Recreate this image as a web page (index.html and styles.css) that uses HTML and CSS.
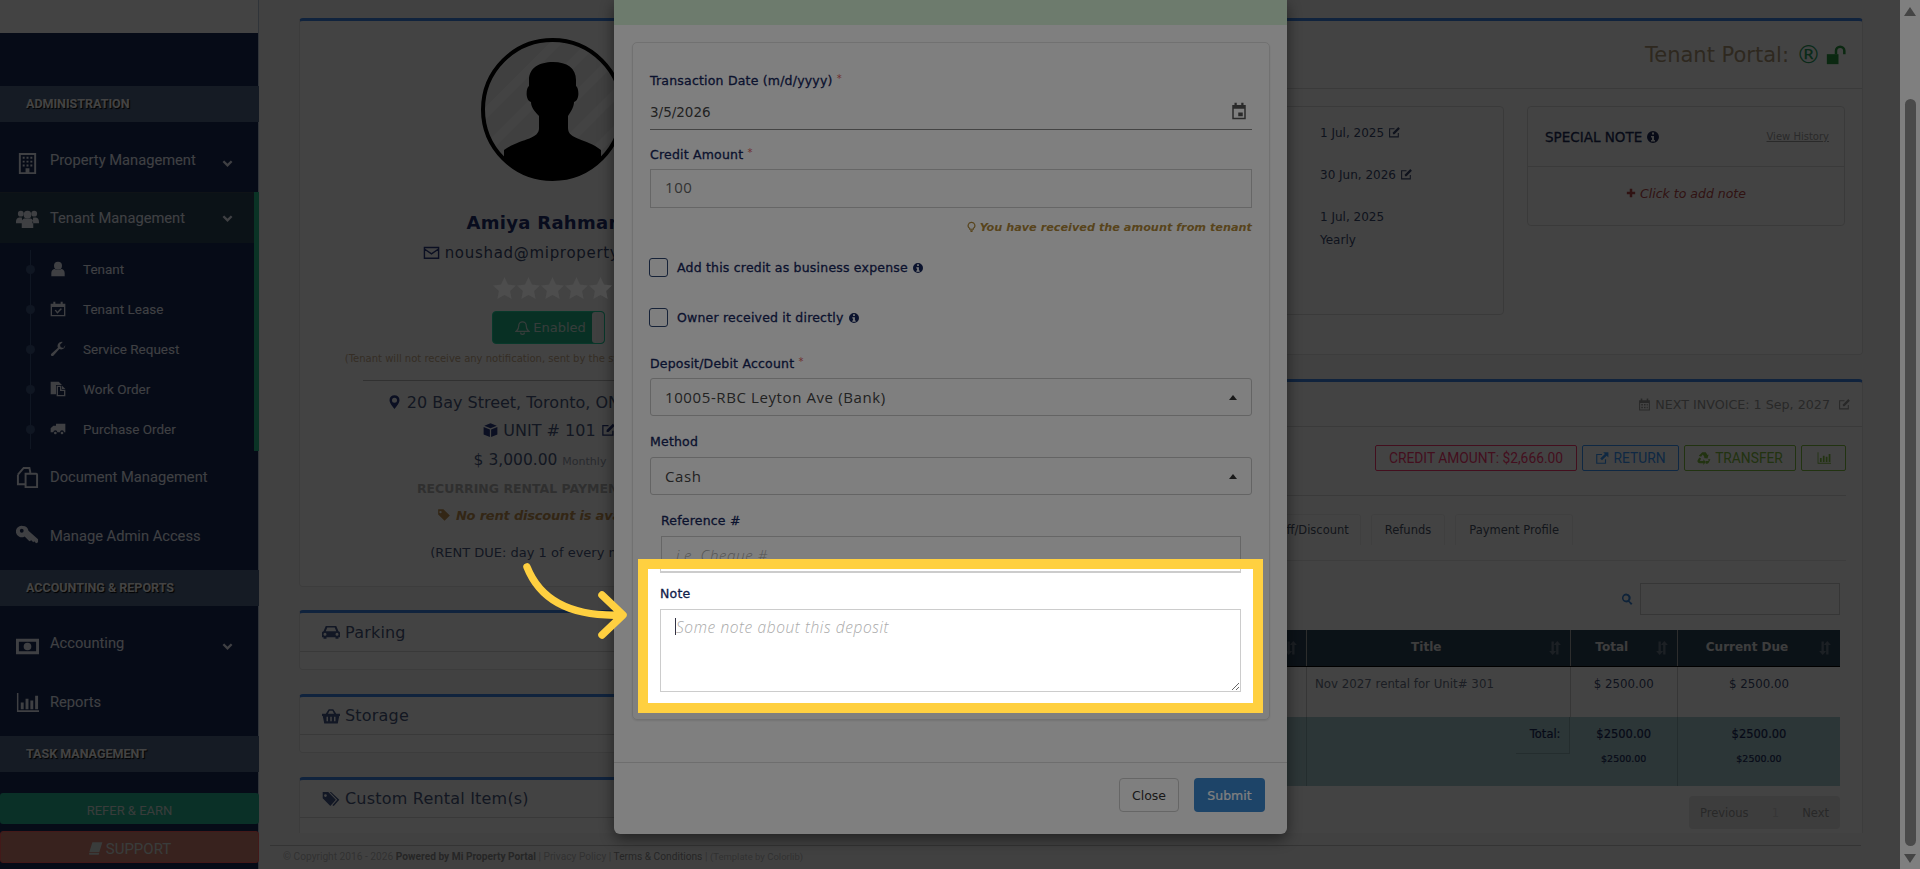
FILE: index.html
```html
<!DOCTYPE html>
<html>
<head>
    <title>Tenant Profile</title>
    <meta charset="UTF-8">
    <link rel="stylesheet" href="styles.css"></head>
<body>
    <svg class="sprite" xmlns="http://www.w3.org/2000/svg">
        <symbol id="i-building" viewBox="0 0 24 24"><path fill-rule="evenodd" d="M3 1h18v22H3zM5 3v18h5v-4h4v4h5V3zM7 5h2v2H7zM11 5h2v2h-2zM15 5h2v2h-2zM7 9h2v2H7zM11 9h2v2h-2zM15 9h2v2h-2zM7 13h2v2H7zM11 13h2v2h-2zM15 13h2v2h-2z"/></symbol>
        <symbol id="i-users" viewBox="0 0 24 24"><circle cx="5" cy="7" r="3"/><circle cx="19" cy="7" r="3"/><circle cx="12" cy="8" r="4"/><path d="M0 16c0-4 2-5 4-5h2l1 6H0zM24 16c0-4-2-5-4-5h-2l-1 6h7zM6 22v-5c0-4 2-5 3-5h6c1 0 3 1 3 5v5z"/></symbol>
        <symbol id="i-user" viewBox="0 0 24 24"><circle cx="12" cy="7" r="6"/><path d="M2 23v-5c0-4 3-6 5-6 3 2 7 2 10 0 2 0 5 2 5 6v5z"/></symbol>
        <symbol id="i-calcheck" viewBox="0 0 24 24"><path fill-rule="evenodd" d="M1 4h4V1h3v3h8V1h3v3h4v19H1zM3 9v12h18V9zM7 14l2-1 2 3 5-5 2 1-7 7z"/></symbol>
        <symbol id="i-wrench" viewBox="0 0 24 24"><path d="M23 6c0 5-5 8-9 6L5 22c-2 2-5-1-3-3l10-9c-2-4 1-9 6-9l1 .5-4 4 1 4 4 1 3-4z"/></symbol>
        <symbol id="i-files" viewBox="0 0 24 24"><path fill-rule="evenodd" d="M1 1h12v5H9v14H1zM13 1l5 5h-5zM10 7h7v6h6v10H10zM12 9v12h9v-6h-6V9zM18 7l5 5h-5z"/></symbol>
        <symbol id="i-truck" viewBox="0 0 24 24"><path d="M9 4h14v13h-2a3 3 0 0 0-6 0h-4a3 3 0 0 0-6 0H1v-6l4-4h4z"/><circle cx="8" cy="18" r="2"/><circle cx="18" cy="18" r="2"/></symbol>
        <symbol id="i-clone" viewBox="0 0 24 24"><path d="M2 9l6-7h6l1 5M10 8h6l5 0c1 0 1 1 1 1v13H10zM2 9v10h7" fill="none" stroke="currentColor" stroke-width="2"/></symbol>
        <symbol id="i-key" viewBox="0 0 24 24"><path fill-rule="evenodd" d="M7 2a6 6 0 0 1 6 5l10 9v3l-2 1-2-2-1 1-2-2-2 1-5-5A6 6 0 1 1 7 2zM6 5a2 2 0 1 0 0 4 2 2 0 0 0 0-4z"/></symbol>
        <symbol id="i-money" viewBox="0 0 24 24"><path fill-rule="evenodd" d="M0 4h24v16H0zM3 7v10h18V7zM12 8a4 4 0 1 1 0 8 4 4 0 0 1 0-8z"/></symbol>
        <symbol id="i-chart" viewBox="0 0 24 24"><path d="M1 2h1.500v18H24v2H1zM5 12h3v7H5zM10 8h3v11h-3zM15 10h3v9h-3zM20 5h3v14h-3z"/></symbol>
        <symbol id="i-book" viewBox="0 0 24 24"><path d="M7 2h16l-5 16H2zM2 19h16l-1 3H3a2 2 0 0 1-1-3z"/></symbol>
        <symbol id="i-mail" viewBox="0 0 24 24"><path fill="none" stroke="currentColor" stroke-width="2" d="M2 5h20v15H2zM2 7l10 7 10-7"/></symbol>
        <symbol id="i-bell" viewBox="0 0 24 24"><path fill="none" stroke="currentColor" stroke-width="2" d="M12 3a6 6 0 0 1 6 6c0 6 2 7 4 9H2c2-2 4-3 4-9a6 6 0 0 1 6-6zM9 20a3 3 0 0 0 6 0"/></symbol>
        <symbol id="i-pin" viewBox="0 0 24 24"><path fill-rule="evenodd" d="M12 1a8 8 0 0 1 8 8c0 5-8 14-8 14S4 14 4 9a8 8 0 0 1 8-8zm0 4a4 4 0 1 0 0 8 4 4 0 0 0 0-8z"/></symbol>
        <symbol id="i-cube" viewBox="0 0 24 24"><path d="M12 1l10 4-10 4L2 5zM1 7l10 4v12L1 19zM13 11l10-4v12l-10 4z"/></symbol>
        <symbol id="i-edit" viewBox="0 0 24 24"><path fill="none" stroke="currentColor" stroke-width="2" d="M19 13v7H3V5h9"/><path d="M9 12L19 2l3 3-10 10H9z"/></symbol>
        <symbol id="i-tag" viewBox="0 0 24 24"><path fill-rule="evenodd" d="M2 2h9l11 11-9 9L2 11zM6 5a2 2 0 1 0 0 4 2 2 0 0 0 0-4z"/></symbol>
        <symbol id="i-tags" viewBox="0 0 26 24"><path fill-rule="evenodd" d="M1 2h8l11 11-8 9L1 11zM5 5a2 2 0 1 0 0 4 2 2 0 0 0 0-4z"/><path d="M13 2l12 11-8 9-2-1 7-8-11-11z"/></symbol>
        <symbol id="i-car" viewBox="0 0 24 24"><path fill-rule="evenodd" d="M5 4h14l3 7c1 0 2 1 2 2v6h-2v2h-4v-2H6v2H2v-2H0v-6c0-1 1-2 2-2zM7 6l-2 5h14l-2-5zM4 13a2 2 0 1 0 0 4 2 2 0 0 0 0-4zM20 13a2 2 0 1 0 0 4 2 2 0 0 0 0-4z"/></symbol>
        <symbol id="i-basket" viewBox="0 0 24 24"><path fill-rule="evenodd" d="M5 9l4-6h6l4 6h5v3h-1l-2 10H3L1 12H0V9zM8 9h8l-2-4h-4zM6 13v6h2v-6zM11 13v6h2v-6zM16 13v6h2v-6z"/></symbol>
        <symbol id="i-cal" viewBox="0 0 24 24"><path fill-rule="evenodd" d="M2 4h3V1h3v3h8V1h3v3h3v19H2zM4 9v12h16V9zM6 11h3v3H6zM11 11h3v3h-3zM16 11h2v3h-2zM6 16h3v3H6zM11 16h3v3h-3zM16 16h2v3h-2z"/></symbol>
        <symbol id="i-ext" viewBox="0 0 24 24"><path fill="none" stroke="currentColor" stroke-width="2" d="M18 14v7H3V6h9"/><path d="M14 2h9v9l-3-3-8 8-3-3 8-8z"/></symbol>
        <symbol id="i-recycle" viewBox="0 0 24 24"><path d="M9 2h6l3 5 2-1-2 7-7-1 2-1-3-5-3 4-4-2zM1 16l3-5 3 2-2 4h6v-3l4 5-4 5v-3H5c-3 0-5-2-4-5zM23 14l-3 6c-1 1-2 2-4 2h-1v-5h5l-1-3z"/></symbol>
        <symbol id="i-search" viewBox="0 0 24 24"><path fill-rule="evenodd" d="M10 1a9 9 0 0 1 7 15l6 5-3 3-5-6A9 9 0 1 1 10 1zm0 4a5 5 0 1 0 0 10 5 5 0 0 0 0-10z"/></symbol>
        <symbol id="i-sort" viewBox="0 0 24 24"><path d="M6 1h4v16h4l-6 7-6-7h4zM18 23h-4V7h-4l6-7 6 7h-4z"/></symbol>
        <symbol id="i-info" viewBox="0 0 24 24"><path fill-rule="evenodd" d="M12 0a12 12 0 1 1 0 24 12 12 0 0 1 0-24zM10 3v4h4V3zM8 10v3h2v5H8v3h8v-3h-2v-8z"/></symbol>
        <symbol id="i-plus" viewBox="0 0 24 24"><path d="M9 2h6v7h7v6h-7v7H9v-7H2V9h7z"/></symbol>
        <symbol id="i-unlock" viewBox="0 0 24 24"><path d="M1 11h14v12H1z"/><path fill="none" stroke="currentColor" stroke-width="3" d="M12 11V7a5 5 0 0 1 10 0v4"/></symbol>
        <symbol id="i-bulb" viewBox="0 0 24 24"><path fill="none" stroke="currentColor" stroke-width="2.500" d="M12 2a7 7 0 0 1 4 13v2H8v-2a7 7 0 0 1 4-13z"/><path d="M9 19h6v2l-2 2h-2l-2-2z"/></symbol>
        <symbol id="i-today" viewBox="0 0 24 24"><path fill-rule="evenodd" d="M3 4h3V1h3v3h6V1h3v3h3v19H3zM5 9v12h14V9zM11 14h6v5h-6z"/></symbol>
        <symbol id="i-chevron" viewBox="0 0 24 24"><path fill="none" stroke="currentColor" stroke-width="5" d="M3 7l9 9 9-9"/></symbol>
        <symbol id="i-star" viewBox="0 0 24 24"><path d="M12 0l3.700 7.800 8.300 1.100-6.100 5.800 1.600 8.300-7.500-4.100-7.500 4.100 1.600-8.300L0 8.900l8.300-1.100z"/></symbol>
    </svg>

    <div class="screen">
        <aside class="sidebar">
            <div class="side-top"></div>
            <div class="side-logo"></div>
            <div class="side-band">ADMINISTRATION</div>
            <a class="side-item item-first"><svg class="side-icon"><use href="#i-building"/></svg>Property Management<svg class="chevron"><use href="#i-chevron"/></svg></a>
            <div class="side-open">
                <a class="side-item item-active"><svg class="side-icon"><use href="#i-users"/></svg>Tenant Management<svg class="chevron"><use href="#i-chevron"/></svg></a>
                <ul class="side-sub">
                    <li><svg class="sub-icon"><use href="#i-user"/></svg>Tenant</li>
                    <li><svg class="sub-icon"><use href="#i-calcheck"/></svg>Tenant Lease</li>
                    <li><svg class="sub-icon"><use href="#i-wrench"/></svg>Service Request</li>
                    <li><svg class="sub-icon"><use href="#i-files"/></svg>Work Order</li>
                    <li><svg class="sub-icon"><use href="#i-truck"/></svg>Purchase Order</li>
                </ul>
            </div>
            <a class="side-item item-doc"><svg class="side-icon"><use href="#i-clone"/></svg>Document Management</a>
            <a class="side-item item-admin"><svg class="side-icon"><use href="#i-key"/></svg>Manage Admin Access</a>
            <div class="side-band">ACCOUNTING &amp; REPORTS</div>
            <a class="side-item item-acc"><svg class="side-icon"><use href="#i-money"/></svg>Accounting<svg class="chevron"><use href="#i-chevron"/></svg></a>
            <a class="side-item item-rep"><svg class="side-icon"><use href="#i-chart"/></svg>Reports</a>
            <div class="side-band">TASK MANAGEMENT</div>
            <a class="side-btn btn-refer">REFER &amp; EARN</a>
            <a class="side-btn btn-support"><svg class="btn-icon"><use href="#i-book"/></svg>SUPPORT</a>
        </aside>

        <main class="main">
            <div class="columns">
                <div class="col-left">
                    <section class="panel profile">
                        <svg class="avatar" viewBox="0 0 143 143">
                            <defs>
                                <clipPath id="avatar-clip"><circle cx="71.500" cy="71.500" r="69.500"/></clipPath>
                                <pattern id="avatar-stripes" width="26" height="26" patternUnits="userSpaceOnUse" patternTransform="rotate(45)"><rect width="26" height="26" fill="#f2f2f2"/><rect width="9" height="26" fill="#fff"/></pattern>
                            </defs>
                            <circle cx="71.500" cy="71.500" r="69.500" fill="url(#avatar-stripes)" stroke="#000" stroke-width="4"/>
                            <path class="avatar-body" clip-path="url(#avatar-clip)" d="M23 112C40 100 58 102 58 90V78C52 72 50 68 50 64 44 62 45 50 48 48V42C48 30 58 24 72 24S95 30 95 42V48C98 50 99 62 93 64 93 68 91 72 87 78V90C87 102 105 100 120 112V143H23Z"/>
                        </svg>
                        <h2 class="tenant-name">Amiya Rahman</h2>
                        <div class="tenant-mail"><svg class="ic-mail"><use href="#i-mail"/></svg>noushad@mipropertyportal.com</div>
                        <div class="stars">
                            <svg class="star"><use href="#i-star"/></svg>
                            <svg class="star"><use href="#i-star"/></svg>
                            <svg class="star"><use href="#i-star"/></svg>
                            <svg class="star"><use href="#i-star"/></svg>
                            <svg class="star"><use href="#i-star"/></svg>
                        </div>
                        <div class="toggle"><span class="toggle-on"><svg class="ic-bell"><use href="#i-bell"/></svg>Enabled</span><span class="toggle-handle"></span></div>
                        <p class="notify-note">(Tenant will not receive any notification, sent by the system, if it is disabled)</p>
                        <hr class="profile-rule">
                        <div class="addr"><svg class="ic-addr"><use href="#i-pin"/></svg>20 Bay Street, Toronto, ON M5J 2N8</div>
                        <div class="unit"><svg class="ic-addr"><use href="#i-cube"/></svg>UNIT # 101 <svg class="ic-addr"><use href="#i-edit"/></svg></div>
                        <div class="rent">$ 3,000.00 <small>Monthly</small></div>
                        <div class="recurring">RECURRING RENTAL PAYMENT</div>
                        <div class="discount"><svg class="ic-tag"><use href="#i-tag"/></svg>No rent discount is available</div>
                        <div class="due">(RENT DUE: day 1 of every month)</div>
                    </section>
                    <section class="panel small-card"><h3 class="card-title title-first"><svg class="ic-title"><use href="#i-car"/></svg>Parking</h3></section>
                    <section class="panel small-card"><h3 class="card-title"><svg class="ic-title"><use href="#i-basket"/></svg>Storage</h3></section>
                    <section class="panel small-card custom-card"><h3 class="card-title"><svg class="ic-title"><use href="#i-tags"/></svg>Custom Rental Item(s)</h3></section>
                </div>

                <div class="col-right">
                    <section class="panel lease-panel">
                        <div class="lease-head">Tenant Portal:<span class="reg">®</span><svg class="ic-unlock"><use href="#i-unlock"/></svg></div>
                        <div class="lease-body">
                            <div class="inner-card date-card">
                                <div class="dates">
                                    <div class="date-row">1 Jul, 2025 <svg class="ic-edit"><use href="#i-edit"/></svg></div>
                                    <div class="date-row">30 Jun, 2026 <svg class="ic-edit"><use href="#i-edit"/></svg></div>
                                    <div class="date-row">1 Jul, 2025</div>
                                    <div class="date-row">Yearly</div>
                                </div>
                            </div>
                            <div class="inner-card note-card">
                                <div class="note-head"><b>SPECIAL NOTE</b><svg class="ic-info-lg"><use href="#i-info"/></svg><a class="history">View History</a></div>
                                <div class="note-add"><svg class="ic-plus"><use href="#i-plus"/></svg>Click to add note</div>
                            </div>
                        </div>
                    </section>

                    <section class="panel ledger-panel">
                        <div class="ledger-head"><svg class="ic-cal"><use href="#i-cal"/></svg>NEXT INVOICE: 1 Sep, 2027 <svg class="ic-cal ic-gap"><use href="#i-edit"/></svg></div>
                        <div class="action-row">
                            <a class="act act-red">CREDIT AMOUNT: $2,666.00</a>
                            <a class="act act-blue"><svg class="ic-act"><use href="#i-ext"/></svg>RETURN</a>
                            <a class="act act-green"><svg class="ic-act"><use href="#i-recycle"/></svg>TRANSFER</a>
                            <a class="act act-green act-chart"><svg class="ic-act"><use href="#i-chart"/></svg></a>
                        </div>
                        <div class="rule-one"></div>
                        <div class="tabs">
                            <a class="tab tab-off">Rent Off/Discount</a>
                            <a class="tab">Refunds</a>
                            <a class="tab">Payment Profile</a>
                        </div>
                        <div class="rule-two"></div>
                        <div class="search-row"><svg class="ic-search"><use href="#i-search"/></svg><input class="search-box" type="text"></div>
                        <table class="ledger">
                            <colgroup><col class="c-a"><col class="c-title"><col class="c-total"><col class="c-due"></colgroup>
                            <thead>
                                <tr><th>Status<svg class="ic-sort"><use href="#i-sort"/></svg></th><th>Title<svg class="ic-sort"><use href="#i-sort"/></svg></th><th>Total<svg class="ic-sort"><use href="#i-sort"/></svg></th><th>Current Due<svg class="ic-sort"><use href="#i-sort"/></svg></th></tr>
                            </thead>
                            <tbody>
                                <tr><td></td><td class="td-title">Nov 2027 rental for Unit# 301</td><td>$ 2500.00</td><td>$ 2500.00</td></tr>
                            </tbody>
                            <tfoot>
                                <tr><td></td><td class="td-label"><div class="total-label">Total:</div></td><td>$2500.00<small>$2500.00</small></td><td>$2500.00<small>$2500.00</small></td></tr>
                            </tfoot>
                        </table>
                        <div class="pager-row"><div class="pager"><span>Previous</span><span class="pager-num">1</span><span>Next</span></div></div>
                    </section>
                </div>
            </div>
            <footer class="footer">© Copyright 2016 - 2026 <b>Powered by Mi Property Portal</b> | Privacy Policy | <span class="foot-dark">Terms &amp; Conditions</span> | <small>(Template by Colorlib)</small></footer>
        </main>

        <div class="scrollbar">
            <span class="sb-up"></span>
            <span class="sb-thumb"></span>
            <span class="sb-down"></span>
        </div>

        <div class="backdrop"></div>

        <div class="modal">
            <div class="modal-strip"></div>
            <div class="modal-panel">
                <label class="lbl lbl-first">Transaction Date (m/d/yyyy) <i class="req">*</i></label>
                <div class="date-field"><span>3/5/2026</span><svg class="ic-today"><use href="#i-today"/></svg></div>
                <label class="lbl lbl-credit">Credit Amount <i class="req">*</i></label>
                <input class="text-input input-credit" type="text" value="100">
                <div class="hint"><svg class="ic-bulb"><use href="#i-bulb"/></svg>You have received the amount from tenant</div>
                <div class="check check-one"><span class="box"></span>Add this credit as business expense<svg class="ic-info"><use href="#i-info"/></svg></div>
                <div class="check check-two"><span class="box"></span>Owner received it directly<svg class="ic-info"><use href="#i-info"/></svg></div>
                <label class="lbl lbl-deposit">Deposit/Debit Account <i class="req">*</i></label>
                <div class="select">10005-RBC Leyton Ave (Bank)</div>
                <label class="lbl lbl-method">Method</label>
                <div class="select select-method">Cash</div>
                <div class="ref-group">
                    <label class="lbl">Reference #</label>
                    <input class="text-input input-ref" type="text" placeholder="i.e. Cheque #">
                </div>
            </div>
            <div class="modal-foot">
                <a class="m-btn m-close">Close</a>
                <a class="m-btn m-submit">Submit</a>
            </div>
        </div>

        <div class="dim"></div>

        <div class="spotlight">
            <div class="spot-edge"></div>
            <label class="lbl spot-label">Note</label>
            <div class="spot-field">
                <textarea class="note-input" placeholder="Some note about this deposit"></textarea>
                <span class="caret"></span>
            </div>
        </div>

        <svg class="arrow" viewBox="0 0 120 90">
            <path d="M7 7C20 40 50 57 102 55M82 35L103 55 82 75"/>
        </svg>
    </div>
</body>
</html>
```

FILE: styles.css
```css
* {
    box-sizing: border-box;
}
html, body {
    margin: 0;
    height: 100%;
    overflow: hidden;
}
body {
    font-family: "DejaVu Sans", sans-serif;
    font-size: 12px;
    color: #3c4a70;
}
h2, h3, p, ul {
    margin: 0;
    padding: 0;
}
.sprite {
    position: absolute;
    width: 0;
    height: 0;
}
svg {
    fill: currentColor;
    flex: none;
}
.screen {
    position: relative;
    display: flex;
    width: 1920px;
    height: 869px;
    overflow: hidden;
    background: #f8f8f8;
}

/* sidebar */
.sidebar {
    width: 259px;
    flex: none;
    background: #1a2d5a;
    color: #f0f4ff;
    font-family: Roboto, sans-serif;
    font-size: 14.700px;
    border-right: 1px solid #b8c4d8;
}
.side-top {
    height: 33px;
    background: #fff;
}
.side-logo {
    height: 53px;
}
.side-band {
    height: 36px;
    line-height: 36px;
    padding-left: 26px;
    margin-right: -1px;
    background: #50688a;
    color: #fff;
    font-size: 12.500px;
    font-weight: 700;
    text-shadow: 1px 1px 1px #000;
}
.side-item {
    display: flex;
    align-items: center;
    position: relative;
    padding-left: 50px;
}
.side-icon {
    position: absolute;
    left: 16px;
    width: 23px;
    height: 23px;
}
.chevron {
    position: absolute;
    left: 222px;
    width: 11px;
    height: 11px;
}
.item-first {
    height: 70px;
    padding-top: 6px;
}
.item-first .side-icon, .item-first .chevron {
    margin-top: 6px;
}
.side-open {
    background: #1a2d5a;
    border-right: 5px solid #26c08e;
    margin-right: -1px;
    height: 259px;
}
.item-active {
    height: 51px;
    background: #2d445a;
    border-top: 1px solid #3a4a5a;
}
.side-sub {
    list-style: none;
    position: relative;
    padding-top: 6px;
    font-size: 13.500px;
}
.side-sub::before {
    content: "";
    position: absolute;
    left: 30px;
    top: 7px;
    bottom: 0;
    width: 1px;
    background: #3c5380;
}
.side-sub li {
    display: flex;
    align-items: center;
    position: relative;
    height: 40px;
    padding-left: 83px;
}
.side-sub li::before {
    content: "";
    position: absolute;
    left: 26px;
    width: 9px;
    height: 9px;
    border-radius: 50%;
    background: #3c5380;
}
.sub-icon {
    position: absolute;
    left: 50px;
    width: 16px;
    height: 16px;
}
.item-doc {
    height: 52px;
}
.item-admin {
    height: 67px;
    padding-bottom: 2px;
}
.item-acc {
    height: 68px;
    padding-top: 6px;
}
.item-acc .side-icon, .item-acc .chevron {
    margin-top: 6px;
}
.item-rep {
    height: 56px;
    margin-bottom: 6px;
}
.side-btn {
    display: flex;
    align-items: center;
    justify-content: center;
    margin-right: -1px;
    padding-top: 3px;
    border-radius: 3px;
    color: #d8e4e0;
    font-size: 13px;
}
.btn-refer {
    height: 31px;
    margin-top: 21px;
    background: #26b593;
}
.btn-support {
    height: 32px;
    margin-top: 7px;
    font-size: 15px;
    background: #d38071;
    border: 1px solid #ff6060;
}
.btn-icon {
    width: 15px;
    height: 15px;
    margin-right: 3px;
}

/* main */
.main {
    flex: 1;
    min-width: 0;
    padding: 18px 37px 0 40px;
    display: flex;
    flex-direction: column;
}
.columns {
    display: flex;
    gap: 25px;
    height: 815px;
    overflow: hidden;
    flex: none;
}
.col-left {
    width: 506px;
    flex: none;
}
.col-right {
    flex: 1;
}
.panel {
    background: #fff;
    border: 1px solid #e4e4e4;
    border-top: 3px solid #3f86e8;
    border-radius: 4px;
}
.profile {
    height: 569px;
    margin-bottom: 23px;
    display: flex;
    flex-direction: column;
    align-items: center;
    text-align: center;
    padding-top: 17px;
}
.avatar {
    width: 143px;
    height: 143px;
}
.avatar-body {
    fill: #000;
}
.tenant-name {
    margin-top: 29px;
    padding-right: 16px;
    height: 26px;
    line-height: 26px;
    font-size: 18px;
    letter-spacing: .3px;
    color: #202e70;
}
.tenant-mail {
    margin: 5px 0 0 26px;
    height: 24px;
    line-height: 24px;
    font-size: 15px;
    letter-spacing: .7px;
    white-space: nowrap;
}
.ic-mail {
    width: 17px;
    height: 17px;
    margin-right: 5px;
    vertical-align: -3px;
    color: #2a3a80;
}
/* the stars read lighter than the dimmed panel, so they stay above the dim layer */
.stars {
    position: relative;
    z-index: 5;
    display: flex;
    gap: 1px;
    height: 24px;
    margin-top: 12px;
    color: #4d4d4d;
}
.star {
    width: 23px;
    height: 23px;
}
.toggle {
    display: flex;
    width: 113px;
    height: 33px;
    margin: 10px 7px 0 0;
    background: #1fb58b;
    border: 1px solid #1fd6a0;
    border-radius: 4px;
    overflow: hidden;
    font-size: 13px;
}
.toggle-on {
    flex: 1;
    display: flex;
    align-items: center;
    justify-content: center;
    padding-left: 16px;
    white-space: nowrap;
    color: #cfe5de;
}
.ic-bell {
    width: 15px;
    height: 15px;
    margin-right: 3px;
}
.toggle-handle {
    width: 12px;
    background: #f2f2f2;
    border-radius: 3px;
}
.notify-note {
    margin-top: 6px;
    padding-right: 32px;
    font-size: 10px;
    line-height: 18px;
    color: #c8ac8c;
    white-space: nowrap;
}
.profile-rule {
    width: 378px;
    margin: 12px 0 0;
    border: 0;
    border-top: 1px solid #bbb;
}
.addr, .unit {
    font-size: 16px;
    line-height: 26px;
    white-space: nowrap;
    color: #4a5a80;
}
.addr {
    margin-top: 9px;
    padding-right: 26px;
}
.unit {
    margin-top: 2px;
}
.ic-addr {
    width: 15px;
    height: 16px;
    margin-right: 5px;
    vertical-align: -2px;
    color: #2a3a80;
}
.rent {
    margin-top: 3px;
    padding-right: 24px;
    font-size: 15.500px;
    line-height: 26px;
    white-space: nowrap;
    color: #4a5a80;
}
.rent small {
    font-size: 11px;
    color: #9aa0b0;
}
.recurring {
    margin-top: 1px;
    padding-right: 60px;
    font-weight: 700;
    font-size: 12.500px;
    line-height: 26px;
    color: #b4b4b4;
    white-space: nowrap;
}
.discount {
    margin-top: 1px;
    padding-right: 7px;
    font-size: 13px;
    letter-spacing: -.2px;
    font-weight: 700;
    font-style: italic;
    line-height: 26px;
    color: #c09050;
    white-space: nowrap;
}
.ic-tag {
    width: 14px;
    height: 14px;
    margin-right: 5px;
    vertical-align: -2px;
}
.due {
    margin-top: 11px;
    padding-right: 18px;
    font-size: 13px;
    line-height: 26px;
    color: #4a5a80;
    white-space: nowrap;
}
.small-card {
    height: 60px;
    margin-bottom: 24px;
}
.small-card + .small-card {
    height: 59px;
}
.custom-card {
    height: 80px;
}
.card-title {
    display: flex;
    align-items: center;
    height: 38px;
    padding-left: 22px;
    font-size: 16px;
    font-weight: 400;
    letter-spacing: .2px;
    color: #4a5a80;
    border-bottom: 1px solid #d8d8d8;
}
.title-first {
    height: 39px;
}
.ic-title {
    width: 18px;
    height: 18px;
    margin-right: 5px;
    color: #44588a;
}

/* right column */
.lease-panel {
    height: 337px;
    margin-bottom: 24px;
}
.lease-head {
    display: flex;
    align-items: center;
    justify-content: flex-end;
    height: 68px;
    padding-right: 16px;
    font-size: 21px;
    color: #b09a78;
    border-bottom: 1px solid #ddd;
    white-space: nowrap;
}
.reg {
    color: #28a060;
    font-size: 25px;
    line-height: 24px;
    margin-left: 7px;
}
.ic-unlock {
    width: 20px;
    height: 20px;
    margin-left: 5px;
    color: #2a9a40;
}
.lease-body {
    display: flex;
    align-items: flex-start;
    gap: 23px;
    padding: 17px 17px 0;
}
.inner-card {
    background: #fff;
    border: 1px solid #ddd;
    border-radius: 4px;
}
.date-card {
    flex: 1;
    height: 209px;
    padding-top: 16px;
}
.dates {
    width: 183px;
    margin-left: auto;
}
.date-row {
    height: 20px;
    line-height: 20px;
    margin-bottom: 22px;
    white-space: nowrap;
}
.date-row:nth-child(3) {
    margin-bottom: 3px;
}
.ic-edit {
    width: 13px;
    height: 13px;
    vertical-align: -2px;
}
.note-card {
    width: 318px;
    height: 120px;
}
.note-head {
    display: flex;
    align-items: center;
    height: 60px;
    padding: 0 15px 0 17px;
    border-bottom: 1px solid #ddd;
    color: #202c58;
}
.note-head b {
    font-size: 13.500px;
    font-weight: 400;
    -webkit-text-stroke: .3px;
}
.ic-info-lg {
    width: 12px;
    height: 12px;
    margin-left: 5px;
}
.history {
    margin-left: auto;
    font-size: 10px;
    text-decoration: underline;
    color: #a0a0a0;
}
.note-add {
    display: flex;
    align-items: center;
    justify-content: center;
    height: 52px;
    font-size: 12.500px;
    font-style: italic;
    color: #b84848;
}
.ic-plus {
    width: 10px;
    height: 10px;
    margin-right: 4px;
}
.ledger-panel {
    height: 470px;
    border-bottom: 0;
}
.ledger-head {
    display: flex;
    align-items: center;
    justify-content: flex-end;
    height: 45px;
    padding-right: 11px;
    font-size: 12.700px;
    color: #9a9a9a;
    border-bottom: 1px solid #ddd;
    white-space: pre;
}
.ic-cal {
    width: 13px;
    height: 13px;
    margin-right: 4px;
}
.ic-gap {
    margin: 0 0 0 4px;
}
.action-row {
    display: flex;
    justify-content: flex-end;
    gap: 5px;
    margin-top: 18px;
    padding-right: 16px;
    font-family: Roboto, sans-serif;
    font-size: 13.800px;
}
.act {
    display: flex;
    align-items: center;
    justify-content: center;
    height: 26px;
    border: 1px solid;
    border-radius: 2px;
    white-space: nowrap;
}
.act-red {
    width: 202px;
    color: #ff3a74;
    border-color: #ff3a74;
}
.act-blue {
    width: 97px;
    color: #3a9aff;
    border-color: #3a9aff;
}
.act-green {
    width: 112px;
    color: #82c040;
    border-color: #82c040;
}
.act-chart {
    width: 45px;
}
.ic-act {
    width: 14px;
    height: 14px;
    margin-right: 4px;
}
.act-chart .ic-act {
    margin: 0;
}
.rule-one, .rule-two {
    height: 1px;
    margin-right: 16px;
    background: #ddd;
}
.rule-one {
    margin-top: 24px;
}
.tabs {
    display: flex;
    justify-content: flex-end;
    gap: 10px;
    height: 31px;
    margin-top: 18px;
    padding-right: 289px;
    color: #4a5468;
}
.tab {
    display: flex;
    align-items: center;
    justify-content: center;
    height: 31px;
    padding: 0 13px;
    border: 1px solid #f0f0f0;
    border-bottom: 0;
    border-radius: 3px 3px 0 0;
    font-size: 11.500px;
    white-space: nowrap;
}
.tab-off {
    padding-right: 11px;
}
.rule-two {
    margin-top: 15px;
    background: #e8e8e8;
}
.search-row {
    display: flex;
    align-items: center;
    justify-content: flex-end;
    margin-top: 22px;
    padding-right: 22px;
}
.search-box {
    width: 200px;
    height: 32px;
    margin-left: 7px;
    background: #fff;
    border: 1px solid #ccc;
}
.ic-search {
    width: 12px;
    height: 12px;
    color: #3a86d8;
}
.ledger {
    width: 840px;
    margin: 15px 22px 0 auto;
    border-collapse: collapse;
    table-layout: fixed;
    text-align: center;
}
.c-a {
    width: 306.500px;
}
.c-title {
    width: 263.500px;
}
.c-total {
    width: 107.500px;
}
.c-due {
    width: 162.500px;
}
.ledger th {
    position: relative;
    height: 36px;
    padding: 0 24px 2px 0;
    background: #2d445a;
    color: #e8e8e8;
    font-size: 12px;
    border-right: 1px solid #aaa;
    border-bottom: 1px solid #000;
}
.ledger th:last-child {
    border-right: 0;
}
.ic-sort {
    position: absolute;
    right: 8px;
    top: 11px;
    width: 14px;
    height: 14px;
    color: #6b7a88;
}
.ledger tbody td {
    height: 51px;
    padding: 0 0 16px;
    border-right: 1px solid #ccc;
    font-size: 11.800px;
}
.ledger td:last-child {
    border-right: 0;
}
.ledger tbody .td-title {
    padding-left: 8px;
    text-align: left;
    color: #6a7488;
}
.ledger tfoot td {
    height: 69px;
    padding: 10px 0 0;
    vertical-align: top;
    background: #a8ccd0;
    border-right: 1px solid #8aaab0;
    color: #18285a;
    font-size: 11.500px;
    font-weight: 400;
    -webkit-text-stroke: .2px;
}
.ledger tfoot small {
    display: block;
    margin-top: 12px;
    font-size: 9.500px;
}
.ledger tfoot .td-label {
    padding: 0;
    border-right-color: #a8ccd0;
}
.total-label {
    width: 54px;
    height: 37px;
    margin-left: auto;
    padding: 10px 8px 0 0;
    text-align: right;
    white-space: nowrap;
    border-right: 1px solid #8aaab0;
    border-bottom: 1px solid #8aaab0;
}
.pager-row {
    display: flex;
    justify-content: flex-end;
    margin-top: 10px;
    padding-right: 22px;
}
.pager {
    display: flex;
    justify-content: space-between;
    width: 151px;
    height: 33px;
    padding: 0 11px;
    align-items: center;
    background: #e8e8e8;
    border-radius: 4px;
    font-size: 11.500px;
    color: #999;
}
.pager-num {
    color: #ccc;
}
.footer {
    flex: none;
    margin: 12px 2px 0 -29px;
    padding: 1px 0 0 13px;
    height: 24px;
    line-height: 19px;
    border-top: 1px solid #c4c4c4;
    font-family: Roboto, sans-serif;
    font-size: 10.200px;
    color: #bbb;
}
.footer b, .foot-dark {
    color: #909090;
}
.footer small {
    font-size: 9.500px;
}
.scrollbar {
    position: relative;
    width: 20px;
    flex: none;
    background: #fff;
}
.sb-thumb {
    position: absolute;
    left: 5px;
    top: 99px;
    width: 11px;
    height: 747px;
    border-radius: 6px;
    background: #949494;
}
.sb-up, .sb-down {
    position: absolute;
    left: 4px;
    width: 0;
    height: 0;
    border-left: 6px solid transparent;
    border-right: 6px solid transparent;
}
.sb-up {
    top: 7px;
    border-bottom: 9px solid #888;
}
.sb-down {
    top: 854px;
    border-top: 9px solid #888;
}

/* modal on top of the page */
.backdrop {
    position: absolute;
    top: 0;
    left: 0;
    right: 20px;
    bottom: 0;
    background: rgba(0, 0, 0, .47);
}
.modal {
    position: absolute;
    left: 614px;
    top: 0;
    width: 673px;
    height: 834px;
    background: #fff;
    border-radius: 0 0 6px 6px;
    box-shadow: 0 5px 15px rgba(0, 0, 0, .5);
    color: #16265c;
}
.modal-strip {
    height: 25px;
    background: #dbf6db;
}
.modal-panel {
    height: 678px;
    margin: 17px 17px 0 18px;
    padding: 26px 17px 0;
    border: 1px solid #e2e2e2;
    border-radius: 5px;
    box-shadow: 0 1px 2px rgba(0, 0, 0, .1);
}
.lbl {
    display: block;
    height: 20px;
    line-height: 20px;
    font-size: 12.500px;
    letter-spacing: .2px;
    color: #16265c;
    -webkit-text-stroke: .3px;
}
.req {
    color: #e06060;
    font-style: normal;
    font-size: 10px;
    vertical-align: 3px;
    -webkit-text-stroke: 0;
}
.date-field {
    display: flex;
    align-items: center;
    justify-content: space-between;
    height: 38px;
    margin-top: 3px;
    padding-top: 3px;
    border-bottom: 1px solid #888;
    font-size: 13.500px;
    color: #444;
}
.ic-today {
    width: 18px;
    height: 18px;
    margin: -3px 4px 0 0;
    color: #555;
}
.lbl-credit {
    margin-top: 13px;
}
.text-input {
    display: block;
    width: 100%;
    padding: 0 14px;
    background: #fff;
    border: 1px solid #ccc;
    font-family: "Open Sans", sans-serif;
    font-size: 15px;
    letter-spacing: .6px;
    color: #666;
}
.text-input::placeholder {
    color: #aaa;
    font-style: italic;
    font-weight: 300;
}
.input-credit {
    height: 39px;
    margin-top: 6px;
    border-width: 1.500px;
    padding-bottom: 3px;
}
.hint {
    display: flex;
    align-items: center;
    justify-content: flex-end;
    height: 20px;
    margin-top: 9px;
    font-size: 11.250px;
    font-style: italic;
    font-weight: 700;
    color: #b08838;
    white-space: nowrap;
}
.ic-bulb {
    width: 11px;
    height: 12px;
    margin-right: 3px;
}
.check {
    display: flex;
    align-items: center;
    height: 19px;
    font-size: 12.500px;
    letter-spacing: .2px;
    color: #16265c;
    -webkit-text-stroke: .3px;
    white-space: nowrap;
}
.check-one {
    margin-top: 21px;
}
.check-two {
    margin-top: 31px;
}
.box {
    width: 19px;
    height: 19px;
    margin: 0 9px 0 -1px;
    border: 1px solid #2c4470;
    border-radius: 3px;
    background: #fff;
}
.ic-info {
    width: 10px;
    height: 10px;
    margin-left: 5px;
}
.lbl-deposit {
    margin-top: 25px;
}
.select {
    position: relative;
    height: 38px;
    margin-top: 6px;
    padding-left: 14px;
    line-height: 36px;
    background: #fff;
    border: 1px solid #c8c8c8;
    border-radius: 3px;
    font-family: "Open Sans", sans-serif;
    font-size: 15px;
    letter-spacing: .6px;
    color: #444;
}
.select::after {
    content: "";
    position: absolute;
    right: 14px;
    top: 16px;
    border-left: 4px solid transparent;
    border-right: 4px solid transparent;
    border-bottom: 5px solid #333;
}
.lbl-method {
    margin-top: 16px;
}
.select-method {
    margin-top: 5px;
}
.ref-group {
    margin: 16px 11px 0;
}
.input-ref {
    height: 37px;
    margin-top: 5px;
}
.modal-foot {
    display: flex;
    justify-content: flex-end;
    gap: 15px;
    height: 72px;
    margin-top: 42px;
    padding: 15px 22px 0 0;
    border-top: 1px solid #ddd;
}
.m-btn {
    display: flex;
    align-items: center;
    justify-content: center;
    height: 34px;
    border-radius: 4px;
    font-size: 12.500px;
}
.m-close {
    width: 60px;
    color: #333;
    border: 1px solid #ccc;
}
.m-submit {
    width: 71px;
    color: #fff;
    background: #3a88d0;
    -webkit-text-stroke: .2px;
}

/* dim layer with the highlighted field above it */
.dim {
    position: absolute;
    inset: 0;
    background: rgba(0, 0, 0, .5);
}
.spotlight {
    position: absolute;
    left: 638px;
    top: 559px;
    width: 625px;
    height: 154px;
    padding: 0 12px;
    background: #fff;
    border: 10px solid #ffd040;
}
.spot-edge {
    height: 4px;
    border: 1px solid #ccc;
    border-top: 0;
    border-bottom-width: 2px;
}
.spot-label {
    margin-top: 11px;
    color: #10204a;
}
.spot-field {
    position: relative;
    height: 83px;
    margin-top: 5px;
}
.note-input {
    display: block;
    width: 100%;
    height: 83px;
    padding: 6px 15px;
    border: 1px solid #ccc;
    outline: 0;
    font-family: "Open Sans", sans-serif;
    font-size: 15.500px;
    letter-spacing: .6px;
}
.note-input::placeholder {
    color: #aaa;
    font-style: italic;
    font-weight: 300;
}
.caret {
    position: absolute;
    left: 15px;
    top: 9px;
    width: 1px;
    height: 17px;
    background: #334;
}
.arrow {
    position: absolute;
    left: 520px;
    top: 560px;
    width: 120px;
    height: 90px;
    fill: none;
    stroke: #ffd040;
    stroke-width: 7.500;
    stroke-linecap: round;
    stroke-linejoin: round;
}
```
